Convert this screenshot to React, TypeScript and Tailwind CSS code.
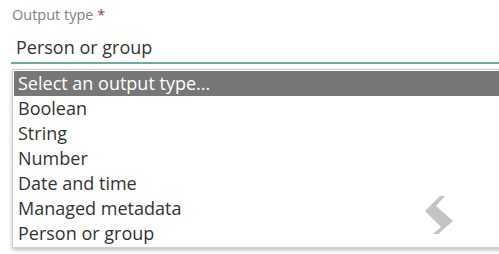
const options = [
  "Boolean",
  "String",
  "Number",
  "Date and time",
  "Managed metadata",
  "Person or group",
];

export default function App() {
  return (
    <div
      className="relative h-[254px] w-[499px] overflow-hidden bg-white"
      style={{ fontFamily: "'Open Sans', 'Noto Sans', sans-serif" }}
    >
      <div className="pl-[12px] pt-[5px] text-[14.5px] leading-[20px] text-[#808080]">
        Output type <span className="text-[#a4373a]">*</span>
      </div>

      <div className="ml-[11px] mt-[10px] border-b-2 border-[#6fa9a2] pb-[3px] pl-[5px] text-[18px] leading-[24px] text-[#333]">
        Person or group
      </div>

      {/* open listbox */}
      <div className="relative ml-[12px] mt-[5px] w-[500px] border border-[#cfcfcf] bg-white py-[1px] pl-[1px] shadow-[0_2px_4px_rgba(0,0,0,0.25)]">
        <div className="h-[25px] bg-[#777777] pl-[4px] text-[18px] leading-[25px] text-white">
          Select an output type...
        </div>
        {options.map((o) => (
          <div key={o} className="h-[25px] pl-[4px] text-[18px] leading-[25px] text-[#333]">
            {o}
          </div>
        ))}

        <svg
          className="absolute left-[411px] top-[125px]"
          width="32"
          height="40"
          viewBox="424 194 32 40"
        >
          <polygon
            points="440,195 445,195 436,205 453,220 438,233 433,233 441,226 425,210"
            fill="#c3c3c3"
          />
        </svg>
      </div>
    </div>
  );
}
